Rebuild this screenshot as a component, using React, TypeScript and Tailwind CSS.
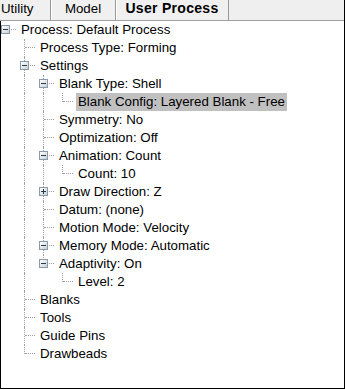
import * as React from 'react'

type Node = {
  label: string
  open?: boolean
  selected?: boolean
  children?: Node[]
}

const tree: Node = {
  label: 'Process: Default Process',
  open: true,
  children: [
    { label: 'Process Type: Forming' },
    {
      label: 'Settings',
      open: true,
      children: [
        {
          label: 'Blank Type: Shell',
          open: true,
          children: [{ label: 'Blank Config: Layered Blank - Free', selected: true }],
        },
        { label: 'Symmetry: No' },
        { label: 'Optimization: Off' },
        { label: 'Animation: Count', open: true, children: [{ label: 'Count: 10' }] },
        { label: 'Draw Direction: Z', open: false, children: [{ label: 'x' }] },
        { label: 'Datum: (none)' },
        { label: 'Motion Mode: Velocity' },
        { label: 'Memory Mode: Automatic', open: true, children: [] },
        { label: 'Adaptivity: On', open: true, children: [{ label: 'Level: 2' }] },
      ],
    },
    { label: 'Blanks' },
    { label: 'Tools' },
    { label: 'Guide Pins' },
    { label: 'Drawbeads' },
  ],
}

type Row = {
  node: Node
  level: number
  last: boolean
  rails: boolean[] // one per column before the connector column
}

const flatten = (n: Node, level: number, last: boolean, rails: boolean[], out: Row[]) => {
  out.push({ node: n, level, last, rails })
  if (n.open && n.children) {
    const next = level === 0 ? [false] : [...rails, !last]
    n.children.forEach((c, i) => {
      flatten(c, level + 1, i === n.children!.length - 1, next, out)
    })
  }
}

const Expander = ({ open }: { open: boolean }) => (
  <span className="absolute left-0 top-[4px] w-[9px] h-[9px] border border-[#8a9aa8] bg-gradient-to-br from-white to-[#c8d0d8] flex items-center justify-center">
    <span className="absolute w-[5px] h-px bg-[#2c3a46]" />
    {!open && <span className="absolute w-px h-[5px] bg-[#2c3a46]" />}
  </span>
)

const TreeRow = ({ row }: { row: Row }) => {
  const { node, level, last, rails } = row
  const hasKids = !!node.children
  return (
    <div className="flex h-[18px] items-stretch">
      {rails.map((on, i) => (
        <div key={i} className="relative w-[19px] shrink-0">
          {on && <span className="absolute left-[4px] top-0 bottom-0 border-l border-dotted border-[#a0a0a0]" />}
        </div>
      ))}
      <div className="relative w-[19px] shrink-0">
        {level >= 1 && (
          <span
            className={
              'absolute left-[4px] top-0 border-l border-dotted border-[#a0a0a0] ' +
              (last ? 'h-[9px]' : 'h-[18px]')
            }
          />
        )}
        {(level >= 1 || hasKids) && (
          <span className="absolute left-[5px] right-[4px] top-[8px] border-t border-dotted border-[#a0a0a0]" />
        )}
        {hasKids && (
          <span className="absolute left-0 top-0">
            <Expander open={!!node.open} />
          </span>
        )}
      </div>
      <span
        className={
          'ml-[-1px] px-[2px] leading-[18px] whitespace-nowrap text-black ' +
          (node.selected ? 'bg-[#c0c0c0]' : '')
        }
      >
        {node.label}
      </span>
    </div>
  )
}

export default function App() {
  const rows: Row[] = []
  flatten(tree, 0, true, [], rows)

  return (
    <div className="w-[345px] h-[389px] flex flex-col bg-white border-r border-black font-['Liberation_Sans',Arial,sans-serif] text-[13.3px] overflow-hidden">
      <div className="h-[21px] shrink-0 flex bg-[#f0f0f0] border-b border-[#a0a0a0]">
        <div className="w-[51px] pl-[1px] leading-[17px] border-r border-[#9a9a9a] shadow-[1px_0_0_#ffffff]">
          Utility
        </div>
        <div className="w-[65px] text-center leading-[17px] border-r border-[#9a9a9a] shadow-[1px_0_0_#ffffff]">
          Model
        </div>
        <div className="w-[113px] text-center font-bold text-[14px] tracking-[0.3px] leading-[17px] border-r border-[#9a9a9a]">
          User Process
        </div>
        <div className="flex-1 bg-[#efefef]" />
      </div>
      <div className="flex-1 border-l border-b border-black">
        {rows.map((r, i) => (
          <TreeRow key={i} row={r} />
        ))}
      </div>
    </div>
  )
}
